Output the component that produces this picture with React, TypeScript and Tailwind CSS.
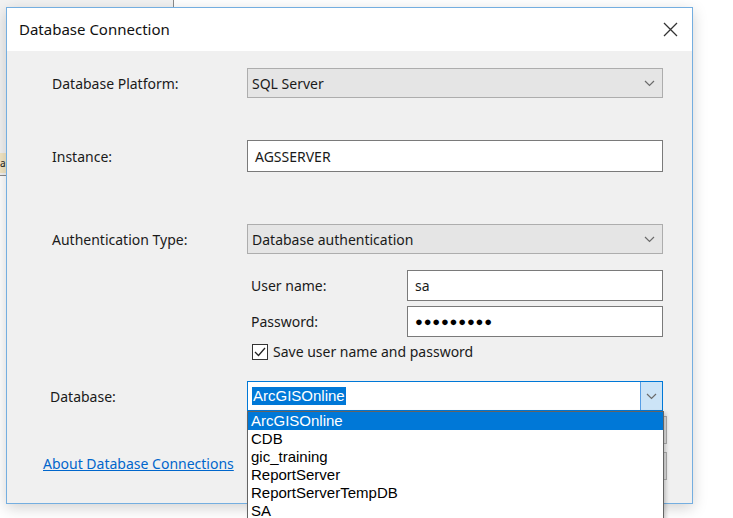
import React from "react";

const Chevron = ({ className = "" }: { className?: string }) => (
  <svg width="11" height="7" viewBox="0 0 11 7" className={className}>
    <path d="M1 1 L5.5 5.5 L10 1" fill="none" stroke="#6b6b6b" strokeWidth="1.2" />
  </svg>
);

const SelectBox = ({ value }: { value: string }) => (
  <div className="w-[416px] h-[30px] bg-[#e5e5e5] border border-[#adadad] flex items-center justify-between pl-[4px] pr-[7px]">
    <span>{value}</span>
    <Chevron />
  </div>
);

const TextBox = ({ value, w, h, big }: { value: string; w: string; h: string; big?: boolean }) => (
  <div className={`${w} ${h} bg-white border border-[#7a7a7a] flex items-center pl-[7px] ${big ? "text-[13px] tracking-[0.8px] text-black" : ""}`}>
    {value}
  </div>
);

const items = ["ArcGISOnline", "CDB", "gic_training", "ReportServer", "ReportServerTempDB", "SA"];

export default function App() {
  return (
    <div
      className="relative w-[733px] h-[518px] bg-white overflow-hidden text-[14px] text-[#1a1a1a]"
      style={{ fontFamily: '"Noto Sans", "Open Sans", sans-serif' }}
    >
      {/* window behind the dialog */}
      <div className="absolute left-0 top-0 w-[174px] h-[176px] bg-[#f2f2f2] border-r border-b border-[#8a8a8a]">
        <div className="absolute left-0 top-[153px] w-[8px] h-[20px] bg-[#f3e6c4] text-[10px] leading-[20px] overflow-hidden">
          a
        </div>
      </div>

      {/* dialog */}
      <div className="absolute left-[6px] top-[7px] w-[687px] h-[497px] border border-[#74aee0] bg-[#f0f0f0] shadow-[0_4px_14px_rgba(0,0,0,0.18)] flex flex-col">
        <div className="h-[43px] bg-white flex items-center justify-between pl-[12px] pr-[14px] shrink-0">
          <span className="text-[15px] text-[#111]">Database Connection</span>
          <svg width="15" height="15" viewBox="0 0 15 15">
            <path d="M1 1 L14 14 M14 1 L1 14" stroke="#333" strokeWidth="1.3" />
          </svg>
        </div>

        <div className="relative flex-1 pl-[45px]">
          <div className="flex items-center mt-[17px]">
            <span className="w-[195px]">Database Platform:</span>
            <SelectBox value="SQL Server" />
          </div>

          <div className="flex items-center mt-[42px]">
            <span className="w-[195px]">Instance:</span>
            <TextBox value="AGSSERVER" w="w-[416px]" h="h-[32px]" />
          </div>

          <div className="flex items-center mt-[52px]">
            <span className="w-[195px]">Authentication Type:</span>
            <SelectBox value="Database authentication" />
          </div>

          <div className="flex flex-col ml-[199px] w-[416px]">
            <div className="flex items-center mt-[16px]">
              <span className="w-[156px]">User name:</span>
              <TextBox value="sa" w="w-[256px]" h="h-[31px]" />
            </div>
            <div className="flex items-center mt-[5px]">
              <span className="w-[156px]">Password:</span>
              <TextBox value="●●●●●●●●●" w="w-[256px]" h="h-[31px]" big />
            </div>
            <div className="flex items-center mt-[4px] ml-[1px]">
              <div className="w-[16px] h-[16px] bg-white border border-[#333] flex items-center justify-center">
                <svg width="12" height="10" viewBox="0 0 12 10">
                  <path d="M1 5 L4.5 8.5 L11 1" fill="none" stroke="#222" strokeWidth="1.3" />
                </svg>
              </div>
              <span className="ml-[5px]">Save user name and password</span>
            </div>
          </div>

          <div className="flex items-center mt-[19px] -ml-[2px]">
            <span className="w-[197px]">Database:</span>
            <div className="w-[416px] h-[30px] bg-white border border-[#0078d7] flex items-center justify-between">
              <span
                className="ml-[4px] bg-[#0078d7] text-white px-[1px] leading-[18px] text-[15px]"
                style={{ fontFamily: '"Liberation Sans Narrow", "Arial Narrow", "Liberation Sans", sans-serif' }}
              >
                ArcGISOnline
              </span>
              <div className="w-[22px] h-full bg-[#cce4f7] border-l border-[#569de5] flex items-center justify-center">
                <Chevron />
              </div>
            </div>
          </div>

          <div className="flex items-start justify-between mt-[5px] -ml-[9px] pr-[25px]">
            <span className="mt-[37px] text-[#0066cc] underline">About Database Connections</span>
            <div className="flex flex-col gap-[8px]">
              <div className="w-[88px] h-[28px] bg-[#e1e1e1] border border-[#adadad]" />
              <div className="w-[88px] h-[28px] bg-[#e1e1e1] border border-[#adadad]" />
            </div>
          </div>
        </div>
      </div>

      {/* open dropdown list */}
      <div
        className="absolute left-[247px] top-[411px] w-[417px] h-[120px] bg-white border border-[#646464] shadow-[2px_2px_4px_rgba(0,0,0,0.2)] text-[15px] text-black"
        style={{ fontFamily: '"Liberation Sans Narrow", "Arial Narrow", "Liberation Sans", sans-serif' }}
      >
        {items.map((it, i) => (
          <div
            key={it}
            className={`h-[18px] leading-[18px] pl-[3px] ${i === 0 ? "bg-[#0078d7] text-white" : ""}`}
          >
            {it}
          </div>
        ))}
      </div>
    </div>
  );
}
